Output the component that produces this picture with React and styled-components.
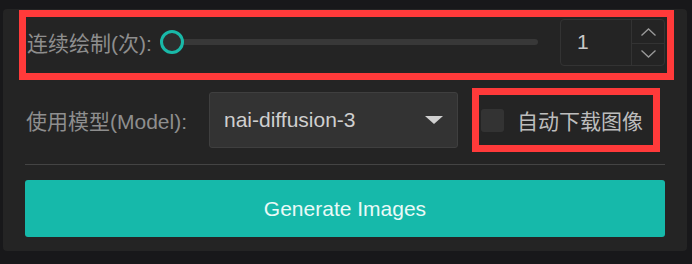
import { useState } from "react";
import styled, { createGlobalStyle } from "styled-components";

const GlobalStyle = createGlobalStyle`
  body {
    margin: 0;
    background: #18181a;
    font-family: "Liberation Sans", "Noto Sans CJK SC", sans-serif;
  }
`;

const Panel = styled.div`
  margin: 9px 0 0 3px;
  width: 684px;
  height: 242px;
  box-sizing: border-box;
  padding: 8px 22px 14px;
  background: #242424;
  border-radius: 4px;
  display: flex;
  flex-direction: column;
  & > * {
    flex-shrink: 0;
  }
`;

const Marked = styled.div`
  outline: 7px solid #ff3a3a;
`;

const SliderRow = styled(Marked)`
  height: 56px;
  box-sizing: border-box;
  margin: 0 -2px 0 1px;
  padding: 0 2px 6px 0;
  display: flex;
  align-items: center;
`;

const Label = styled.span`
  font-size: 21px;
  color: #8e8e8e;
  white-space: nowrap;
  flex-shrink: 0;
  width: ${(p) => p.$width || "auto"};
  margin-left: 1px;
`;

const Range = styled.input.attrs({ type: "range" })`
  -webkit-appearance: none;
  appearance: none;
  flex: 1;
  margin: 0 22px 0 8px;
  height: 24px;
  background: transparent;

  &::-webkit-slider-runnable-track {
    height: 6px;
    border-radius: 3px;
    background: #383838;
  }
  &::-webkit-slider-thumb {
    -webkit-appearance: none;
    width: 24px;
    height: 24px;
    margin-top: -9px;
    box-sizing: border-box;
    border-radius: 50%;
    border: 3.5px solid #19b9a8;
    background: #2d2d2d;
  }
`;

const NumberBox = styled.div`
  width: 105px;
  height: 47px;
  box-sizing: border-box;
  border: 1px solid #333;
  border-radius: 4px;
  display: flex;
  flex-shrink: 0;
`;

const NumberValue = styled.input`
  flex: 1;
  min-width: 0;
  border: none;
  outline: none;
  background: transparent;
  padding: 0 0 0 16px;
  font: inherit;
  font-size: 21px;
  color: #c8c8c8;
`;

const Steppers = styled.div`
  width: 32px;
  border-left: 1px solid #333;
  display: flex;
  flex-direction: column;
`;

const Step = styled.button`
  flex: 1;
  border: none;
  background: transparent;
  padding: ${(p) => (p.$up ? "2px 0 0" : "0")};
  display: flex;
  align-items: center;
  justify-content: center;
  color: #9a9a9a;
  cursor: pointer;
  & + & {
    border-top: 1px solid #333;
  }
`;

const ModelRow = styled.div`
  margin-top: 19px;
  height: 56px;
  display: flex;
  align-items: center;
`;

const Select = styled.div`
  width: 249px;
  height: 56px;
  box-sizing: border-box;
  border: 1px solid #3f3f3f;
  border-radius: 3px;
  background: #333;
  padding: 0 14px;
  display: flex;
  align-items: center;
  justify-content: space-between;
  font-size: 21px;
  color: #cfcfcf;
`;

const Caret = styled.span`
  width: 0;
  height: 0;
  border-left: 9px solid transparent;
  border-right: 9px solid transparent;
  border-top: 8px solid #d0d0d0;
`;

const CheckLabel = styled(Marked)`
  margin-left: 21px;
  height: 50px;
  box-sizing: border-box;
  padding: 0 10px 0 2px;
  display: flex;
  align-items: center;
  gap: 13px;
  font-size: 21px;
  color: #bdbdbd;
  cursor: pointer;
`;

const Box = styled.span`
  width: 23px;
  height: 23px;
  border-radius: 3px;
  background: ${(p) => (p.$on ? "#19b9a8" : "#333")};
`;

const Divider = styled.hr`
  margin: 16px 0 0;
  border: none;
  height: 1px;
  background: #444;
`;

const GenerateButton = styled.button`
  margin-top: 15px;
  height: 57px;
  border: none;
  border-radius: 3px;
  background: #16b9aa;
  color: #eafaf7;
  font: inherit;
  font-size: 21px;
  cursor: pointer;
`;

const Chevron = ({ up }) => (
  <svg width="15" height="8" viewBox="0 0 15 8" fill="none" stroke="currentColor" strokeWidth="1.3">
    <path d={up ? "M0.5 7.5 L7.5 1 L14.5 7.5" : "M0.5 0.5 L7.5 7 L14.5 0.5"} />
  </svg>
);

const App = () => {
  const [count, setCount] = useState(1);
  const [autoSave, setAutoSave] = useState(false);

  return (
    <>
      <GlobalStyle />
      <Panel>
        <SliderRow>
          <Label>连续绘制(次):</Label>
          <Range min={1} max={20} value={count} onChange={(e) => setCount(+e.target.value)} />
          <NumberBox>
            <NumberValue value={count} onChange={(e) => setCount(+e.target.value || 1)} />
            <Steppers>
              <Step $up onClick={() => setCount(count + 1)}>
                <Chevron up />
              </Step>
              <Step onClick={() => setCount(Math.max(1, count - 1))}>
                <Chevron />
              </Step>
            </Steppers>
          </NumberBox>
        </SliderRow>

        <ModelRow>
          <Label $width="183px">使用模型(Model):</Label>
          <Select>
            nai-diffusion-3
            <Caret />
          </Select>
          <CheckLabel onClick={() => setAutoSave(!autoSave)}>
            <Box $on={autoSave} />
            自动下载图像
          </CheckLabel>
        </ModelRow>

        <Divider />
        <GenerateButton>Generate Images</GenerateButton>
      </Panel>
    </>
  );
};

export default App;
